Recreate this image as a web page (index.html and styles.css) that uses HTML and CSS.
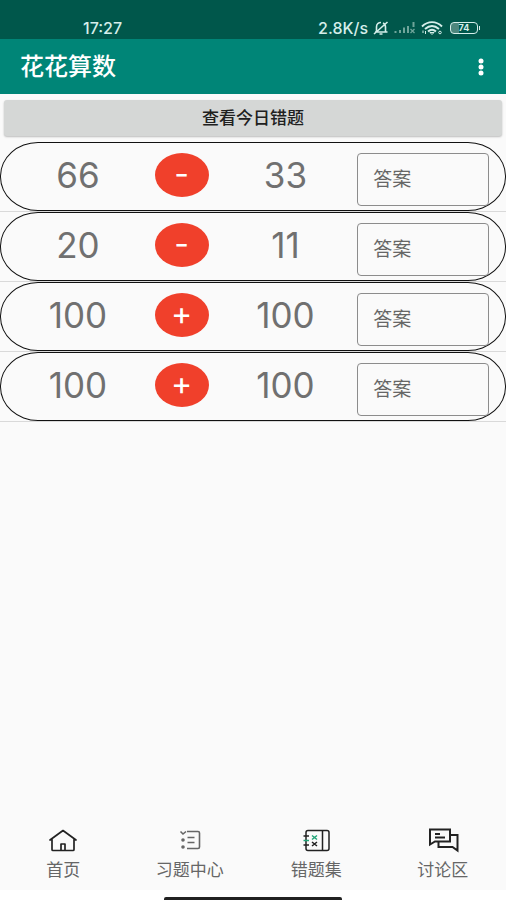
FILE: index.html
```html
<!DOCTYPE html>
<html lang="zh-CN">
<head>
<meta charset="utf-8">
<meta name="viewport" content="width=device-width, initial-scale=1">
<title>花花算数</title>
<link rel="stylesheet" href="styles.css">
</head>
<body>
<div class="status">
  <span>17:27</span>
  <div class="status-right">
    <span>2.8K/s</span>
    <svg width="16" height="14" viewBox="0 0 16 14" fill="none" stroke="#d5eeea" stroke-width="1.6"><path d="M2 11h12.500M3.500 10.500V6C3.500 3 5.500 1.500 8 1.500M10 2c1.700.8 2.500 2.200 2.500 4v4.500M6.500 13h3M1 13L14.500 1"/></svg>
    <svg width="22" height="12" viewBox="0 0 22 12" fill="none" stroke="#6fa59a" stroke-width="2"><path d="M1.500 11V9M6 11V8M10 11V5.500M14 11V4M19.500 5V0"/><path stroke-width="1.300" d="M16.500 7l4 4M20.500 7l-4 4"/></svg>
    <svg width="22" height="14" viewBox="0 0 22 14" fill="none" stroke="#d5eeea" stroke-width="1.900"><path d="M1 5.500C7-.3 15-.3 21 5.500M4 8c4.500-4 9.500-4 14 0M7 10.500c2.500-2.300 5.500-2.300 8 0"/><path d="M9 11.500h4L11 13.500zM2 12V9.500M4.500 10v3" stroke-width="1"/><circle cx="19" cy="11.500" r="1.300" stroke-width="1"/></svg>
    <span class="battery">74</span>
  </div>
</div>
<header class="appbar">
  <h1>花花算数</h1>
  <button class="more" aria-label="更多选项"><svg width="6" height="18" viewBox="0 0 6 18" fill="#fff"><circle cx="3" cy="3" r="2.500"/><circle cx="3" cy="9" r="2.500"/><circle cx="3" cy="15" r="2.500"/></svg></button>
</header>
<main>
  <button class="review">查看今日错题</button>
  <ul class="list">
    <li><div class="problem"><span>66</span><span class="op">-</span><span>33</span><input placeholder="答案" aria-label="答案"></div></li>
    <li><div class="problem"><span>20</span><span class="op">-</span><span>11</span><input placeholder="答案" aria-label="答案"></div></li>
    <li><div class="problem"><span>100</span><span class="op">+</span><span>100</span><input placeholder="答案" aria-label="答案"></div></li>
    <li><div class="problem"><span>100</span><span class="op">+</span><span>100</span><input placeholder="答案" aria-label="答案"></div></li>
  </ul>
</main>
<nav class="tabs">
  <a href="#home"><svg width="30" height="26" viewBox="0 0 30 26" fill="none" stroke="#222" stroke-width="1.700" stroke-linejoin="round" stroke-linecap="round"><path d="M2 13L15 3.500 28 13M4 12v10.500q0 1 1 1h20q1 0 1-1V12M13 23v-6h4v6"/></svg><span>首页</span></a>
  <a href="#practice"><svg width="30" height="26" viewBox="0 0 30 26" fill="none" stroke="#666" stroke-width="1.600"><path d="M12 4.500h11q1.500 0 1.500 1.500v14q0 1.500-1.500 1.500H12M12.500 10.500h7M12.500 15.500h7M5.500 4.500L8 7l3-2.500"/><circle cx="8" cy="13" r="1" fill="#666"/><circle cx="8" cy="20" r="1" fill="#666"/></svg><span>习题中心</span></a>
  <a href="#mistakes"><svg width="30" height="26" viewBox="0 0 30 26" fill="none" stroke="#222" stroke-width="1.500"><rect x="5" y="3.500" width="23" height="20" rx="2"/><path d="M21.500 3.500v20M2.500 9H8M2.500 18H8"/><path stroke="#20a477" d="M2.500 13.500H8M11 8.500l5 4M16 8.500l-5 4"/><path d="M11 15l5 4M16 15l-5 4"/></svg><span>错题集</span></a>
  <a href="#discuss"><svg width="32" height="26" viewBox="0 0 32 26" fill="none" stroke="#222" stroke-width="2"><path d="M3 2.500h20v12H8L3 17.500zM23 8h7.500v15.500L25.500 20H11.500v-5M8 7h5M8 10.500h10"/></svg><span>讨论区</span></a>
</nav>
<div class="gesture"></div>
</body>
</html>
```
FILE: styles.css
```css
* { box-sizing: border-box; }
body {
  margin: 0;
  min-height: 100vh;
  display: flex;
  flex-direction: column;
  background: #fafafa;
  color: #666;
  font-family: Inter, "Noto Sans CJK SC", sans-serif;
}
button, input { font: inherit; }
.status {
  display: flex;
  justify-content: space-between;
  align-items: center;
  height: 39px;
  padding: 17px 26px 0 83px;
  background: #00574b;
  color: #d5eeea;
  font-size: 16px;
  font-weight: 500;
  line-height: 20px;
}
.status-right { display: flex; align-items: center; gap: 5px; }
.battery {
  position: relative;
  width: 28px;
  height: 12px;
  margin: 0 2px;
  border: 1px solid #d5eeea;
  border-radius: 4px;
  background: linear-gradient(90deg, #4d877d 30%, transparent 30%);
  font-size: 9px;
  font-weight: 700;
  line-height: 10px;
  text-align: center;
}
.battery::after {
  content: "";
  position: absolute;
  right: -3px;
  top: 3px;
  width: 1px;
  height: 4px;
  background: #d5eeea;
}
.appbar {
  display: flex;
  justify-content: space-between;
  align-items: center;
  height: 55px;
  padding: 0 16px 0 20px;
  background: #008577;
  color: #fff;
}
.appbar h1 { margin: 0; font-size: 24px; font-weight: 500; line-height: 32px; }
.more { display: flex; padding: 6px; border: 0; background: none; }
main { flex: 1; }
.review {
  display: block;
  width: calc(100% - 8px);
  height: 36px;
  margin: 6px 4px;
  padding: 0;
  border: 0;
  border-radius: 3px;
  background: #d5d7d6;
  box-shadow: 0 1px 2px #bbb;
  color: #202020;
  font-size: 17px;
  font-weight: 500;
  line-height: 24px;
}
.list { margin: 0; padding: 0; list-style: none; }
.list li { border-bottom: 1px solid #d9d9d9; }
.problem {
  display: grid;
  grid-template-columns: 104fr 104fr 104fr 152fr;
  height: 69px;
  padding: 10px 16px 4px 25px;
  border: 1px solid #111;
  border-radius: 38px / 34px;
  color: #707070;
  font-size: 35px;
  line-height: 44px;
  text-align: center;
}
.op {
  justify-self: center;
  width: 54px;
  height: 44px;
  border-radius: 50%;
  background: #f0402b;
  color: #fff;
  font-size: 32px;
  line-height: 42px;
}
.problem input {
  width: calc(100% - 20px);
  margin-left: 20px;
  height: 53px;
  padding: 0 15px;
  border: 1px solid #8c8c8c;
  border-radius: 4px;
  background: transparent;
  color: #444;
  font-size: 19px;
}
.problem input::placeholder { color: #666; opacity: 1; }
.tabs { display: grid; grid-template-columns: repeat(4, 1fr); height: 63px; }
.tabs a {
  display: flex;
  flex-direction: column;
  align-items: center;
  gap: 5px;
  color: #666;
  font-size: 17px;
  line-height: 24px;
  text-decoration: none;
}
.gesture {
  display: flex;
  justify-content: center;
  align-items: flex-end;
  height: 10px;
  background: #fff;
}
.gesture::before {
  content: "";
  width: 35%;
  height: 3px;
  border-radius: 2px 2px 0 0;
  background: #222;
}
```
